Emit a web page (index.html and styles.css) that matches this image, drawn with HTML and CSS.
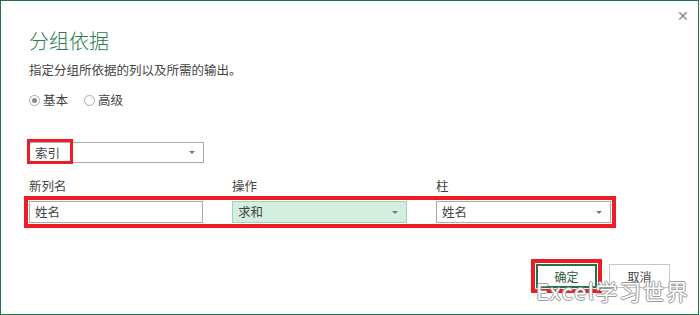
FILE: index.html
```html
<!DOCTYPE html>
<html lang="zh-CN">
<head>
<meta charset="UTF-8" />
<title>分组依据</title>
<link rel="stylesheet" href="styles.css">
</head>
<body>

<div class="dialog">
  <span class="close">&#x2715;</span>

  <h1 class="title">分组依据</h1>
  <p class="desc">指定分组所依据的列以及所需的输出。</p>

  <div class="radios">
    <label class="radio"><span class="dot checked"></span>基本</label>
    <label class="radio"><span class="dot"></span>高级</label>
  </div>

  <div class="select group-by">
    <span>索引</span>
    <span class="arrow"></span>
    <span class="mark mark-group"></span>
  </div>

  <div class="fields">
    <div class="labels">
      <span>新列名</span>
      <span>操作</span>
      <span>柱</span>
    </div>
    <div class="row">
      <div class="input">姓名</div>
      <div class="select op"><span>求和</span><span class="arrow"></span></div>
      <div class="select"><span>姓名</span><span class="arrow"></span></div>
    </div>
  </div>

  <div class="actions">
    <div class="mark-btn"><button class="btn ok">确定</button></div>
    <button class="btn">取消</button>
  </div>

  <div class="watermark">Excel学习世界</div>
</div>

</body>
</html>
```

FILE: styles.css
```css
body {
  margin: 0;
  font-family: "Noto Sans CJK SC", "Noto Sans", sans-serif;
  color: #444;
}
.dialog {
  position: relative;
  width: 699px;
  height: 315px;
  box-sizing: border-box;
  border: 1px solid #217346;
  padding: 0 28px;
  overflow: hidden;
}
.close {
  position: absolute;
  top: 4px;
  right: 9px;
  font-size: 14px;
  font-weight: 300;
  color: #888;
}
.title {
  margin: 28px 0 0;
  font-size: 20px;
  font-weight: 300;
  line-height: 24px;
  color: #2a7a50;
}
.desc {
  margin: 8px 0 0;
  font-size: 12.5px;
  line-height: 18px;
}
.radios {
  display: flex;
  gap: 16px;
  margin-top: 12px;
  font-size: 12.5px;
  line-height: 18px;
}
.radio {
  display: flex;
  align-items: center;
  gap: 3px;
}
.dot {
  width: 9px;
  height: 9px;
  border: 1px solid #aaa;
  border-radius: 50%;
  display: flex;
  align-items: center;
  justify-content: center;
}
.dot.checked::after {
  content: "";
  width: 5px;
  height: 5px;
  border-radius: 50%;
  background: #888;
}

/* campos */
.select, .input {
  position: relative;
  box-sizing: border-box;
  height: 22px;
  border: 1px solid #ababab;
  padding: 0 8px 0 5px;
  font-size: 12.5px;
  line-height: 20px;
  display: flex;
  align-items: center;
  justify-content: space-between;
  background: white;
}
.arrow {
  width: 0;
  height: 0;
  border-left: 3px solid transparent;
  border-right: 3px solid transparent;
  border-top: 3px solid #777;
}
.group-by {
  width: 175px;
  height: 21px;
  margin-top: 33px;
}
.select.op {
  background: #d4efdf;
  border-color: #9ed6b5;
}

/* marcas rojas */
.mark {
  position: absolute;
  border: 3px solid #ee1c25;
}
.mark-group {
  left: -3px;
  top: -4px;
  width: 40px;
  height: 19px;
}

.labels {
  display: grid;
  grid-template-columns: 174px 175px 175px;
  column-gap: 29px;
  margin-top: 14px;
  font-size: 12.5px;
  line-height: 18px;
}
.row {
  display: grid;
  grid-template-columns: 174px 175px 175px;
  column-gap: 29px;
  width: max-content;
  margin: 1px 0 0 -5px;
  border: 4px solid #ee1c25;
  padding: 1px;
}

.actions {
  display: flex;
  justify-content: flex-end;
  align-items: center;
  gap: 7px;
  margin-top: 31px;
}
.mark-btn {
  border: 4px solid #ee1c25;
  padding: 1px;
}
.btn {
  display: block;
  width: 61px;
  height: 24px;
  box-sizing: border-box;
  background: white;
  border: 1px solid #c6c6c6;
  font-family: inherit;
  font-size: 12px;
  color: #444;
  padding: 0;
}
.btn.ok {
  border: 2px solid #217346;
  color: #2e5a3c;
}

.watermark {
  position: absolute;
  left: 535px;
  top: 275px;
  font-size: 22px;
  line-height: 28px;
  letter-spacing: 1.5px;
  color: white;
  text-shadow: 1px 0 0 #999, -1px 0 0 #999, 0 1px 0 #999, 0 -1px 0 #999;
}
```
